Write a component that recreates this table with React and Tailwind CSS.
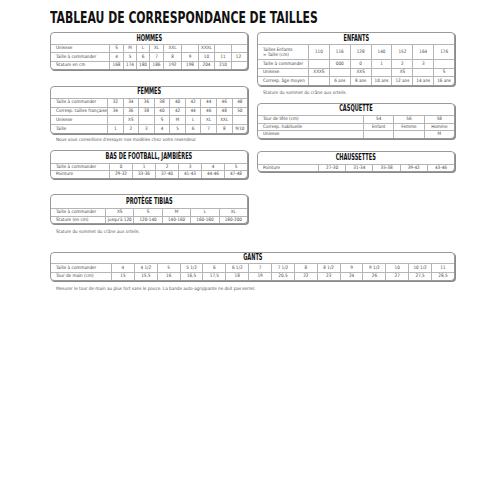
import React from 'react';

const body = "font-['DejaVu_Sans_Condensed','Liberation_Sans_Narrow',sans-serif]";
const head = "font-['Liberation_Sans_Narrow','DejaVu_Sans_Condensed',sans-serif] font-bold";

// Une boîte arrondie avec titre et lignes de tailles
const SizeTable = ({ title, labelW, colW, rows, headH = 'h-[11px]', rowH = 'h-[8px]', className = '' }) => (
  <div className={`rounded-[4px] border border-[#9a9a9a] shadow-[1px_1px_0_#8a8a8a] overflow-hidden bg-white ${className}`}>
    <div className={`${headH} flex items-center justify-center ${head} text-[8px] leading-none text-[#111]`}>
      <span className="inline-block scale-x-[0.7] whitespace-nowrap">{title}</span>
    </div>
    <div className={`${body} text-[4.6px] leading-none text-[#444]`}>
      {rows.map((r, ri) => (
        <div key={ri} className={`${r.tall ? 'h-[15.3px]' : rowH} flex border-t border-[#b5b5b5]`}>
          <div className={`${labelW} shrink-0 flex items-center pl-[5px] whitespace-nowrap`}>{r[0]}</div>
          {r.slice(1).map((c, ci) => (
            <div
              key={ci}
              className={`${colW ? colW[ci] + ' shrink-0' : 'flex-1 basis-0'} flex items-center justify-center border-l border-[#b5b5b5] whitespace-nowrap`}
            >
              {c}
            </div>
          ))}
        </div>
      ))}
    </div>
  </div>
);

const Note = ({ children, className = '' }) => (
  <p className={`${body} text-[4.6px] leading-[5px] text-[#555] pl-[6px] ${className}`}>{children}</p>
);

const tallRow = (arr) => {
  arr.tall = true;
  return arr;
};

export default function App() {
  const hommes = [
    ['Unisexe', 'S', 'M', 'L', 'XL', 'XXL', '', 'XXXL', '', ''],
    ['Taille à commander', '4', '5', '6', '7', '8', '9', '10', '11', '12'],
    ['Stature en cm', '168', '174', '180', '186', '192', '198', '204', '210', ''],
  ];
  const femmes = [
    ['Taille à commander', '32', '34', '36', '38', '40', '42', '44', '46', '48'],
    ['Corresp. tailles française', '34', '36', '38', '40', '42', '44', '46', '48', '50'],
    ['Unisexe', '', 'XS', '', 'S', 'M', 'L', 'XL', 'XXL', ''],
    ['Taille', '1', '2', '3', '4', '5', '6', '7', '8', '9/10'],
  ];
  const enfants = [
    tallRow([
      <span className="block leading-[5.5px]">Tailles Enfants<br />= Taille (cm)</span>,
      '110', '116', '128', '140', '152', '164', '176',
    ]),
    ['Taille à commander', '', '000', '0', '1', '2', '3', ''],
    ['Unisexe', 'XXXS', '', 'XXS', '', 'XS', '', 'S'],
    ['Corresp. âge moyen', '', '6 ans', '8 ans', '10 ans', '12 ans', '14 ans', '16 ans'],
  ];
  const casquette = [
    ['Tour de tête (cm)', '54', '56', '58'],
    ['Corresp. habituelle', 'Enfant', 'Femme', 'Homme'],
    ['Unisexe', '', '', 'M'],
  ];
  const chaussettes = [['Pointure', '27-30', '31-34', '35-38', '39-42', '43-46']];
  const bas = [
    ['Taille à commander', '0', '1', '2', '3', '4', '5'],
    ['Pointure', '29-32', '33-36', '37-40', '41-43', '44-46', '47-48'],
  ];
  const tibias = [
    ['Taille à commander', 'XS', 'S', 'M', 'L', 'XL'],
    ['Stature (en cm)', 'jusqu\'à 120', '120-140', '140-160', '160-180', '180-200'],
  ];
  const gants = [
    ['Taille à commander', '4', '4 1/2', '5', '5 1/2', '6', '6 1/2', '7', '7 1/2', '8', '8 1/2', '9', '9 1/2', '10', '10 1/2', '11'],
    ['Tour de main (cm)', '15', '15,5', '16', '16,5', '17,5', '18', '19', '20,5', '22', '23', '24', '26', '27', '27,5', '28,5'],
  ];

  return (
    <div className="w-[500px] h-[500px] bg-white pl-[50px] pt-[9px]">
      <h1 className={`${head} text-[16px] leading-[17px] text-[#111] origin-left scale-x-[0.755] whitespace-nowrap`}>
        TABLEAU DE CORRESPONDANCE DE TAILLES
      </h1>

      <div className="flex items-start gap-[9px] mt-[6px] w-[405px]">
        <div className="w-[198px] flex flex-col">
          <SizeTable
            title="HOMMES"
            labelW="w-[58px]"
            colW={['w-[14px]', 'w-[13px]', 'w-[13px]', 'w-[14px]', 'w-[18px]', 'w-[17px]', 'w-[16px]', 'w-[17px]', 'w-[14px]']}
            rows={hommes}
            rowH="h-[8.3px]"
          />
          <SizeTable title="FEMMES" labelW="w-[56px]" rows={femmes} rowH="h-[8.75px]" className="mt-[16px]" />
          <Note className="mt-[3px]">Nous vous conseillons d'essayer nos modèles chez votre revendeur.</Note>
          <SizeTable title="BAS DE FOOTBALL, JAMBIÈRES" labelW="w-[58px]" rows={bas} headH="h-[11.5px]" rowH="h-[7.5px]" className="mt-[8.5px]" />
          <SizeTable title="PROTÈGE TIBIAS" labelW="w-[54px]" rows={tibias} headH="h-[13px]" rowH="h-[7.5px]" className="mt-[15.5px]" />
          <Note className="mt-[4.5px]">Stature du sommet du crâne aux orteils.</Note>
        </div>

        <div className="w-[198px] flex flex-col">
          <SizeTable title="ENFANTS" labelW="w-[50px]" rows={enfants} rowH="h-[8.5px]" />
          <Note className="mt-[4.5px]">Stature du sommet du crâne aux orteils.</Note>
          <SizeTable title="CASQUETTE" labelW="w-[105px]" rows={casquette} rowH="h-[7.8px]" className="mt-[7.5px]" />
          <SizeTable title="CHAUSSETTES" labelW="w-[60px]" rows={chaussettes} headH="h-[12px]" rowH="h-[7.5px]" className="mt-[11.5px]" />
        </div>
      </div>

      <SizeTable title="GANTS" labelW="w-[60px]" rows={gants} headH="h-[10px]" rowH="h-[8.5px]" className="w-[405px] mt-[18.2px]" />
      <Note className="mt-[4.5px]">Mesurer le tour de main au plus fort sans le pouce. La bande auto-agrippante ne doit pas serrer.</Note>
    </div>
  );
}
